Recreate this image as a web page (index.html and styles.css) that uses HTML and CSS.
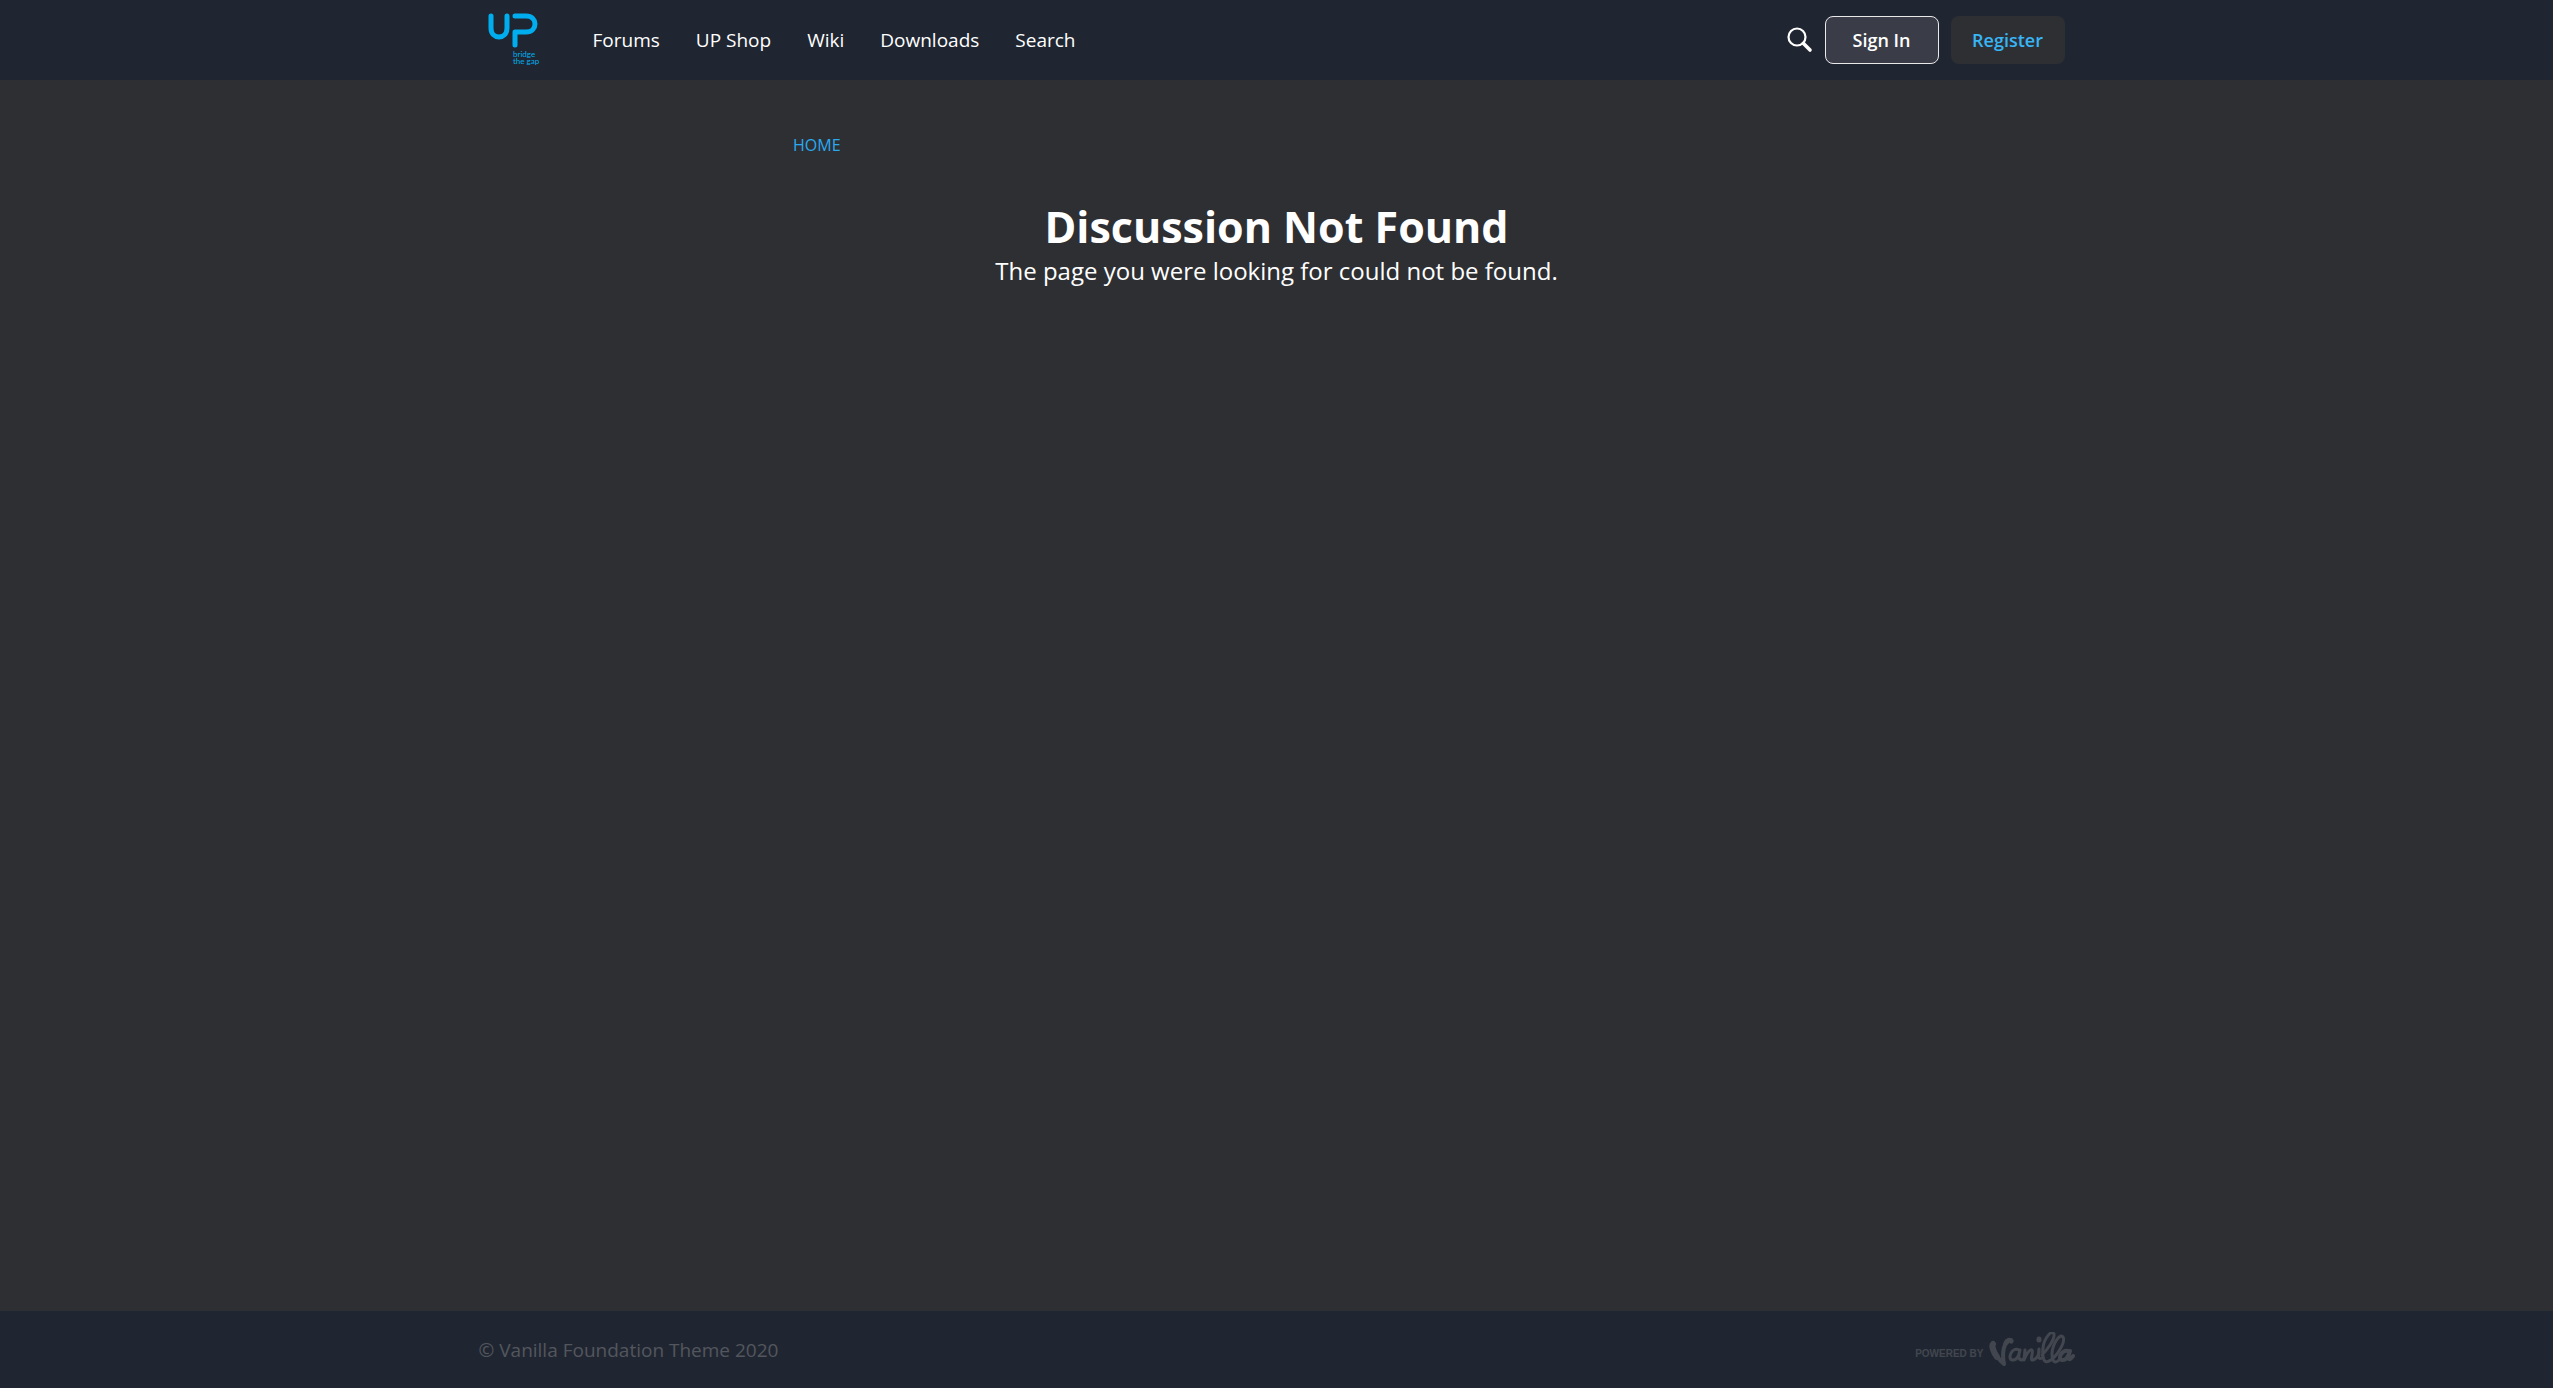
FILE: index.html
```html
<!DOCTYPE html>
<html lang="en">
<head>
  <meta charset="utf-8">
  <title>Discussion Not Found</title>
  <link rel="stylesheet" href="styles.css">
</head>
<body>
  <div class="page">
    <header class="header">
      <div class="container header-bar">
        <a class="logo" href="#" aria-label="UP bridge the gap">
          <svg width="54" height="56" viewBox="0 0 54 56" aria-hidden="true">
            <g fill="none" stroke="#00aeef" stroke-width="5" stroke-linecap="round" stroke-linejoin="round">
              <path d="M2 4V16C2 28 18 28 18 16V4"/>
              <path d="M26 4H37C49 4 49 20 37 20H26V33"/>
            </g>
            <g class="logo-tag">
              <text x="24" y="45">bridge</text>
              <text x="24" y="52">the gap</text>
            </g>
          </svg>
        </a>
        <nav class="nav" aria-label="Main">
          <a href="#">Forums</a>
          <a href="#">UP Shop</a>
          <a href="#">Wiki</a>
          <a href="#">Downloads</a>
          <a href="#">Search</a>
        </nav>
        <div class="account">
          <button class="search-button" type="button" aria-label="Search">
            <svg width="26" height="26" viewBox="0 0 26 26" fill="none" stroke="#fff" aria-hidden="true">
              <circle cx="10" cy="10" r="8.5" stroke-width="2.2"/>
              <path d="M16.5 16.5L23 23" stroke-width="3.6" stroke-linecap="round"/>
            </svg>
          </button>
          <a class="button sign-in" href="#">Sign In</a>
          <a class="button register" href="#">Register</a>
        </div>
      </div>
    </header>
    <main class="main">
      <nav class="breadcrumb" aria-label="Breadcrumb"><a href="#">HOME</a></nav>
      <h1>Discussion Not Found</h1>
      <p class="message">The page you were looking for could not be found.</p>
    </main>
    <footer class="footer">
      <div class="container footer-bar">
        <span>© Vanilla Foundation Theme 2020</span>
        <a class="powered" href="#" aria-label="Powered by Vanilla">
          <span>POWERED BY</span>
          <svg width="86" height="36" viewBox="0 0 86 36" fill="none" stroke="#42464f" stroke-linecap="round" stroke-linejoin="round" aria-hidden="true">
            <path d="M4 12C2 14 5 21 8 25" stroke-width="6"/>
            <path d="M4 14C6 22 10 28 15 32C13 22 14 9 22 8" stroke-width="4"/>
            <path d="M17 11Q19 7 22 9" stroke-width="5"/>
            <path d="M30 18C23 14 18 27 23 28C28 29 30 23 31 18C29 24 29 28 33 28Q36 27 37 23" stroke-width="3"/>
            <path d="M36 18L35 28C37 22 41 17 43 18C45 20 40 29 44 28Q48 27 50 21L50 17C49 24 49 28 53 26" stroke-width="3"/>
            <path d="M50 7V8" stroke-width="5"/>
            <path d="M53 23C57 19 66 8 65 2C63 -3 55 6 54 16C53 26 55 32 60 29C67 26 77 10 74 5C71 1 64 11 63 21C63 30 66 32 70 28" stroke-width="3"/>
            <path d="M79 19C73 17 68 27 73 28C78 29 80 22 81 19C78 27 80 30 84 24" stroke-width="4"/>
          </svg>
        </a>
      </div>
    </footer>
  </div>
</body>
</html>
```
FILE: styles.css
```css
* {
  box-sizing: border-box;
}

body {
  margin: 0;
  background: #fff;
  font-family: "Open Sans", sans-serif;
  font-size: 19px;
  color: #fff;
}

a {
  color: inherit;
  text-decoration: none;
}

.page {
  display: flex;
  flex-direction: column;
  min-height: calc(100vh - 4px);
  margin-right: 7px;
  background: #2e2f33;
}

.container {
  display: flex;
  align-items: center;
  width: 100%;
  max-width: 1596px;
  margin: 0 auto;
}

.header,
.footer {
  background: #202631;
}

.header-bar {
  height: 80px;
  padding: 0 10px;
}

.logo {
  display: flex;
  margin-right: 50px;
}

.logo svg {
  overflow: visible;
}

.logo-tag {
  fill: #00aeef;
  font-family: Lato, sans-serif;
  font-size: 8px;
}

.nav {
  display: flex;
  gap: 36px;
}

.account {
  display: flex;
  align-items: center;
  margin-left: auto;
}

.search-button {
  display: flex;
  margin-right: 12px;
  padding: 0;
  border: 0;
  background: none;
}

.button {
  width: 114px;
  height: 48px;
  border-radius: 8px;
  font-size: 18px;
  font-weight: 600;
  line-height: 48px;
  text-align: center;
}

.sign-in {
  border: 1px solid #e9e9ea;
  background: #3a3d47;
  line-height: 46px;
}

.register {
  margin-left: 12px;
  background: #2e2f33;
  color: #38b5f5;
}

.main {
  flex: 1;
  width: 100%;
  max-width: 967px;
  margin: 0 auto;
  padding-top: 54px;
  text-align: center;
}

.breadcrumb {
  color: #29aaf0;
  font-size: 16px;
  line-height: 22px;
  text-align: left;
}

h1 {
  margin: 44px 0 0;
  font-size: 43px;
  line-height: 54px;
}

.message {
  margin: 0;
  font-size: 24px;
  line-height: 34px;
}

.footer-bar {
  justify-content: space-between;
  height: 77px;
  color: #53565e;
}

.powered {
  display: flex;
  align-items: center;
  gap: 5px;
  color: #42464f;
  font-family: "Liberation Sans", sans-serif;
  font-size: 10px;
  font-weight: 700;
}

.powered span {
  padding-top: 8px;
}
```
